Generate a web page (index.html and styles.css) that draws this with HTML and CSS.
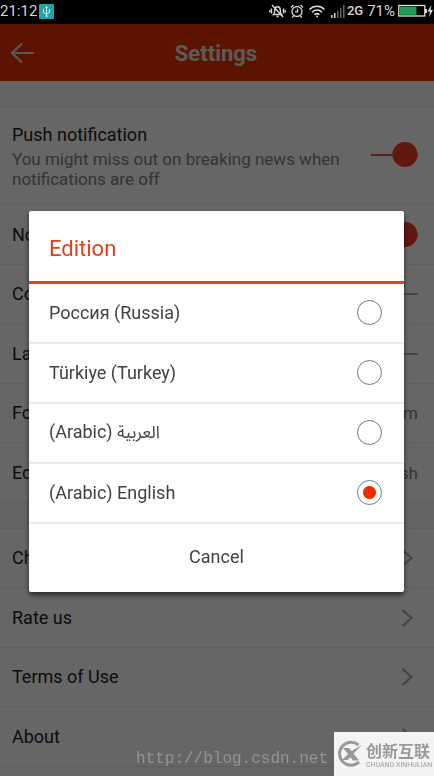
FILE: index.html
```html
<!DOCTYPE html>
<html lang="en">
<head>
<meta charset="utf-8">
<meta name="viewport" content="width=device-width, initial-scale=1">
<title>Settings</title>
<link rel="stylesheet" href="styles.css">
</head>
<body>
<div class="statusbar">
  <span class="clock">21:12</span>
  <svg class="usb" width="15" height="15" viewBox="0 0 15 15" aria-hidden="true">
    <rect width="15" height="15" rx="1" fill="#21a5a0"/>
    <path d="M7.500 2.500v10M4.500 5v3.500l3 1.500 3-1.500V5M6.500 4l1-1.500 1 1.500" fill="none" stroke="#c8efec" stroke-width="1"/>
    <circle cx="7.500" cy="12" r="1" fill="#c8efec"/>
  </svg>
  <span class="status-icons">
    <svg width="17" height="16" viewBox="0 0 17 16" fill="none" stroke="#d6d6d6" stroke-width="1.400" aria-hidden="true">
      <path d="M4.500 11.500h8c-1-1-1.200-2-1.200-4.500 0-2-1-3.300-2.800-3.300S5.700 5 5.700 7c0 2.500-.2 3.500-1.200 4.500zM7.500 13.500h2M3 2l11 12M2.500 5.500v5M.8 7v2.500M14.500 5.500v5M16.200 7v2.500"/>
    </svg>
    <svg width="14" height="16" viewBox="0 0 14 16" fill="none" stroke="#d6d6d6" stroke-width="1.300" aria-hidden="true">
      <circle cx="7" cy="8.500" r="5"/><path d="M7.500 5.500v3.300H5M1 4.500L3.500 2M13 4.500L10.500 2M3.500 13l-1.300 1.500M10.500 13l1.300 1.500"/>
    </svg>
    <svg width="18" height="16" viewBox="0 0 18 16" fill="none" stroke="#dedede" stroke-width="1.500" aria-hidden="true">
      <path d="M1.500 6.500c4.300-4.200 10.700-4.200 15 0M4 9.200c2.900-2.800 7.100-2.800 10 0M6.500 11.800c1.500-1.400 3.500-1.400 5 0"/><circle cx="9" cy="13.500" r="1" fill="#dedede" stroke="none"/>
    </svg>
    <svg width="15" height="16" viewBox="0 0 15 16" aria-hidden="true">
      <path d="M1 12h1.500v3H1zM4 10h1.500v5H4z" fill="#d6d6d6"/><path d="M7 8h1.500v7H7zM10 5h1.500v10H10zM13 2h1.500v13H13z" fill="#666"/>
    </svg>
  </span>
  <span class="network">2G</span>
  <span class="charge">71%</span>
  <svg class="battery" width="36" height="14" viewBox="0 0 36 14" aria-hidden="true">
    <rect x=".8" y="1.500" width="26" height="10.500" fill="none" stroke="#ddd" stroke-width="1.300"/>
    <rect x="2" y="2.700" width="16.500" height="8.200" fill="#1f9d50"/>
    <path d="M27 5h2v4h-2z" fill="#ddd"/><path d="M33.500 1l-4 6.500h2.500l-1 5.500 4-7h-2.500z" fill="#ddd"/>
  </svg>
</div>

<header class="appbar">
  <button class="back" type="button" aria-label="Back">
    <svg width="24" height="22" viewBox="0 0 24 22" fill="none" stroke="currentColor" stroke-width="2.200" aria-hidden="true"><path d="M12 1.500L2 11l10 9.500M2 11h22"/></svg>
  </button>
  <h1>Settings</h1>
</header>

<main class="settings">
  <section class="group">
    <div class="row push">
      <label for="push"><span class="name">Push notification</span><span class="hint">You might miss out on breaking news when notifications are off</span></label>
      <input class="switch" id="push" type="checkbox" checked>
    </div>
    <div class="row"><label for="night">No</label><input class="switch" id="night" type="checkbox" checked></div>
    <div class="row"><label for="compact">Compact</label><input class="switch" id="compact" type="checkbox"></div>
    <div class="row"><label for="large">Large</label><input class="switch" id="large" type="checkbox"></div>
    <a class="row" href="#font"><span>Font</span><span class="value">Medium</span></a>
    <a class="row" href="#edition"><span>Edition</span><span class="value">English</span></a>
  </section>
  <section class="group more">
    <a class="row" href="#check"><span>Check</span><svg class="chevron" viewBox="0 0 12 18" aria-hidden="true"><path d="M1.500 1l9 8-9 8"/></svg></a>
    <a class="row" href="#rate"><span>Rate us</span><svg class="chevron" viewBox="0 0 12 18" aria-hidden="true"><path d="M1.500 1l9 8-9 8"/></svg></a>
    <a class="row" href="#terms"><span>Terms of Use</span><svg class="chevron" viewBox="0 0 12 18" aria-hidden="true"><path d="M1.500 1l9 8-9 8"/></svg></a>
    <a class="row" href="#about"><span>About</span><svg class="chevron" viewBox="0 0 12 18" aria-hidden="true"><path d="M1.500 1l9 8-9 8"/></svg></a>
  </section>
</main>

<div class="scrim">
  <form class="dialog" role="dialog" aria-labelledby="dialog-title">
    <h2 id="dialog-title">Edition</h2>
    <label class="option" for="ru"><span>Россия (Russia)</span><input id="ru" type="radio" name="edition"></label>
    <label class="option" for="tr"><span>Türkiye (Turkey)</span><input id="tr" type="radio" name="edition"></label>
    <label class="option" for="ar"><span>(Arabic) <bdi class="arabic" lang="ar">العربية</bdi></span><input id="ar" type="radio" name="edition"></label>
    <label class="option" for="en"><span>(Arabic) English</span><input id="en" type="radio" name="edition" checked></label>
    <button class="cancel" type="button">Cancel</button>
  </form>
</div>

<footer class="credits">
  <span class="source">http://blog.csdn.net</span>
  <div class="brand">
    <svg width="28" height="28" viewBox="0 0 28 28" fill="none" stroke="#999" aria-hidden="true">
      <path d="M22.500 5A11.500 11.500 0 1 0 23 22" stroke-width="3"/>
      <path d="M7 8h6l2.500 3L26 5l-8.500 8.500 5.500 7h-6l-2.500-3.300L11.500 20H6l6-6z" fill="#999" stroke="none"/>
    </svg>
    <div class="brand-text"><span class="brand-name" lang="zh">创新互联</span><span class="brand-sub">CHUANG XINHULIAN</span></div>
  </div>
</footer>
</body>
</html>
```
FILE: styles.css
```css
* { box-sizing: border-box; }
body {
  margin: 0;
  min-height: 100vh;
  display: flex;
  flex-direction: column;
  background: #fff;
  color: #222;
  font-family: Roboto, "Noto Sans", sans-serif;
  font-size: 18px;
  line-height: 20px;
}
button, input { margin: 0; font: inherit; }

.statusbar {
  height: 24px;
  padding-bottom: 2px;
  display: flex;
  align-items: center;
  background: #000;
  color: #d6d6d6;
  font-size: 15px;
}
.usb { margin-left: 2px; }
.status-icons { display: flex; align-items: center; gap: 4px; margin-left: auto; }
.network { margin-left: 2px; font-size: 13px; font-weight: 500; }
.charge { margin-left: 4px; font-size: 15px; }
.battery { margin-left: 3px; }

.appbar {
  display: grid;
  grid-template-columns: 44px 1fr 46px;
  align-items: center;
  height: 57px;
  background: #e63000;
  color: #fff;
}
.back { display: flex; padding: 0 0 0 10px; border: 0; background: none; color: #e0e0e0; }
.appbar h1 {
  margin: 0;
  padding-top: 3px;
  color: #e6e0de;
  font-size: 22px;
  font-weight: 700;
  line-height: 24px;
  text-align: center;
}

.group { border-top: 1px solid #ededed; }
.settings { padding-top: 25px; background: #fafafa; }
.more { margin-top: 25px; }
.row {
  display: flex;
  align-items: center;
  justify-content: space-between;
  min-height: 60px;
  padding: 0 16px 0 12px;
  border-bottom: 1px solid #ededed;
  background: #fff;
  color: #222;
  text-decoration: none;
}
.row:nth-child(odd) { min-height: 59px; }
.more .row { padding-right: 21px; }
.row.push { min-height: 98px; padding-bottom: 2px; }
.push .name, .push .hint { display: block; }
.push .name { line-height: 28px; }
.hint { color: #828282; font-size: 17px; }
.value { color: #828282; font-size: 17px; }

.switch {
  flex: none;
  width: 47px;
  height: 25px;
  appearance: none;
  background:
    radial-gradient(circle at 13px 50%, #aaa 12px, transparent 13px),
    linear-gradient(#aaa, #aaa) center / 100% 2px no-repeat;
}
.switch:checked {
  background:
    radial-gradient(circle at 34px 50%, #f03a24 12px, transparent 13px),
    linear-gradient(#f0503c, #f0503c) center / 100% 2px no-repeat;
}
.chevron { width: 12px; height: 18px; fill: none; stroke: #a6a6a6; stroke-width: 2; }

.scrim {
  position: fixed;
  inset: 24px 0 0;
  display: flex;
  align-items: center;
  padding: 2px 30px 0 29px;
  background: rgb(0 0 0 / 60%);
}
.dialog {
  width: 100%;
  border-radius: 2px;
  background: #fff;
  box-shadow: 0 3px 5px rgb(0 0 0 / 60%);
  color: #424242;
}
.dialog h2 {
  margin: 0;
  padding: 25px 20px 20px;
  border-bottom: 3px solid #de4724;
  color: #e2401b;
  font-size: 22px;
  font-weight: 400;
  line-height: 25px;
}
.option {
  display: flex;
  align-items: center;
  justify-content: space-between;
  height: 60px;
  padding: 0 22px 0 20px;
  border-bottom: 2px solid #ebebeb;
}
.option input {
  width: 25px;
  height: 25px;
  appearance: none;
  border: 1px solid #777;
  border-radius: 50%;
}
.option input:checked {
  border-color: #64808e;
  background: radial-gradient(circle, #ea2e00 6px, transparent 7px);
}
.arabic { font-family: "Noto Sans Arabic", "DejaVu Sans", sans-serif; font-size: 17px; }
.cancel {
  display: block;
  width: 100%;
  height: 68px;
  padding: 0 0 2px;
  border: 0;
  background: none;
  color: #424242;
}

.credits {
  position: fixed;
  right: 0;
  bottom: 0;
  display: flex;
  align-items: center;
}
.source {
  padding-top: 10px;
  color: #949494;
  font-family: "Liberation Mono", monospace;
  font-size: 16px;
}
.brand {
  display: flex;
  align-items: center;
  gap: 2px;
  width: 100px;
  height: 44px;
  margin-left: 6px;
  padding-left: 2px;
  background: #f4f4f4;
  color: #999;
}
.brand-text { display: flex; flex-direction: column; }
.brand-name { font-family: "Noto Sans CJK SC", sans-serif; font-size: 16px; font-weight: 700; line-height: 22px; }
.brand-sub { font-size: 7px; line-height: 8px; white-space: nowrap; }
```
